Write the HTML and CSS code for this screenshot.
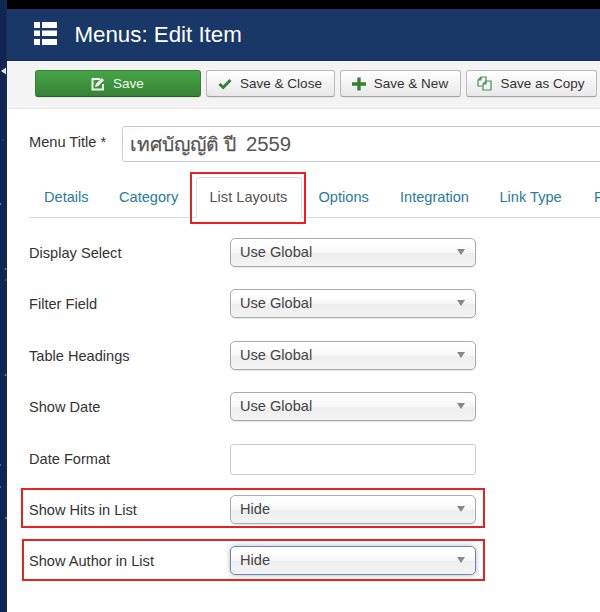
FILE: index.html
```html
<!DOCTYPE html>
<html lang="en">
<head>
<meta charset="utf-8">
<title>Menus: Edit Item</title>
<link rel="stylesheet" href="styles.css">
</head>
<body>
<div class="page">
  <aside class="rail">
    <svg width="7" height="612" viewBox="0 0 7 612"><path d="M1 71 6 67.500V74.500Z" fill="#e2e5ed"/><g fill="#5d7aae"><circle cx="5.500" cy="269" r="1"/><circle cx="5.500" cy="280" r=".8"/><circle cx="5.500" cy="375" r="1"/><circle cx="0" cy="204" r="1.200"/><circle cx="3" cy="140" r=".6"/><circle cx="0" cy="465" r="1"/><circle cx="0" cy="487" r="1"/><circle cx="6" cy="518" r="1"/></g></svg>
  </aside>
  <main class="main">
    <div class="topbar"></div>
    <header class="header">
      <svg class="list-icon" width="23" height="23" viewBox="0 0 23 23" fill="#fff"><path d="M0 0h6v6H0zM8 0h15v6H8zM0 8.500h6v5.500H0zM8 8.500h15v5.500H8zM0 17h6v6H0zM8 17h15v6H8z"/></svg>
      <h1>Menus: Edit Item</h1>
    </header>
    <div class="toolbar">
      <button class="btn save"><svg width="14" height="14" viewBox="0 0 14 14" fill="none" stroke="#edfbed"><path d="M9 2H1.500V12.500H12V7" stroke-width="2"/><path d="M4 10 4.800 7 10.800 1 13 3.200 7 9.200Z" fill="#edfbed" stroke="none"/></svg><span>Save</span></button>
      <button class="btn close"><svg width="14" height="14" viewBox="0 0 14 14"><path d="M1.500 7 5.200 10.500 12.500 3" fill="none" stroke="#378137" stroke-width="3"/></svg><span>Save &amp; Close</span></button>
      <button class="btn new"><svg width="14" height="14" viewBox="0 0 14 14"><path d="M7 .5V13.500M0 7H14" stroke="#378137" stroke-width="3.400"/></svg><span>Save &amp; New</span></button>
      <button class="btn copy"><svg width="15" height="15" viewBox="0 0 15 15" fill="#f3faf3" stroke="#4c8d50" stroke-width="1.200"><path d="M4 1H9V10H1V4ZM4 1V4H1"/><path d="M9 5H14V14H6V8ZM9 5V8H6"/></svg><span>Save as Copy</span></button>
    </div>
    <div class="content">
      <div class="title-row"><label>Menu Title *</label><div class="title-input"><span class="thai">เทศบัญญัติ ปี</span><span>2559</span></div></div>
      <nav class="tabs">
        <a class="details">Details</a><a class="category">Category</a><a class="active">List Layouts<i class="mark tab-mark"></i></a><a class="options">Options</a><a class="integration">Integration</a><a class="link-type">Link Type</a><a>Page Display</a>
      </nav>
      <div class="form">
        <div class="row"><label>Display Select</label><div class="select">Use Global</div></div>
        <div class="row"><label>Filter Field</label><div class="select">Use Global</div></div>
        <div class="row"><label>Table Headings</label><div class="select">Use Global</div></div>
        <div class="row"><label>Show Date</label><div class="select">Use Global</div></div>
        <div class="row"><label>Date Format</label><div class="text-input"></div></div>
        <div class="row"><label>Show Hits in List</label><div class="select">Hide</div><i class="mark hits-mark"></i></div>
        <div class="row"><label>Show Author in List</label><div class="select focus">Hide</div><i class="mark author-mark"></i></div>
      </div>
    </div>
  </main>
</div>
</body>
</html>
```
FILE: styles.css
```css
* { box-sizing: border-box; }
body { margin: 0; background: #fff; color: #333; font: 14.600px "Liberation Sans", Arial, sans-serif; }
.page { display: flex; width: 600px; height: 612px; overflow: hidden; }
.rail { flex: 0 0 7px; background: linear-gradient(90deg, #102552 0 5px, #1b2b50); }
.rail svg { display: block; }
.main { flex: 1; min-width: 0; overflow: hidden; }
.topbar { height: 9px; background: #000; }
.header { height: 52px; padding: 0 27px; display: flex; align-items: center; gap: 17.500px; background: #1a3867; border-bottom: 1px solid #142c54; color: #fff; }
.list-icon { display: block; margin-top: -3px; }
h1 { margin: 0; font-size: 22.300px; font-weight: normal; line-height: 50px; }
.toolbar { height: 48px; padding: 9px 0 0 27.500px; display: flex; gap: 5px; background: #f4f4f4; border-bottom: 1px solid #e5e5e5; }
.btn { flex: none; height: 27px; padding: 0; display: flex; align-items: center; justify-content: center; gap: 8px; border: 1px solid #bbb; border-bottom-color: #a2a2a2; border-radius: 3px; background: linear-gradient(#fff, #e8e8e8); color: #333; font: 13.500px "Liberation Sans", Arial, sans-serif; box-shadow: 0 1px 1px #0001; white-space: nowrap; }
.save { width: 166px; border-color: #388038 #378037 #286028; background: linear-gradient(#46a546, #378137); color: #edfbed; }
.close { width: 129px; }
.new { width: 121px; }
.copy { width: 131px; }
.content { padding: 17px 0 0 22px; }
.title-row { display: flex; height: 36px; }
.title-row label { width: 93px; flex: none; padding-top: 8px; }
.title-input { width: 520px; flex: none; height: 36px; padding-left: 7px; display: flex; gap: 6px; align-items: center; border: 1px solid #ccc; border-radius: 3px; color: #555; font-size: 20.300px; }
.thai { width: 110px; font-size: 19.300px; white-space: nowrap; -webkit-text-stroke: .25px #555; }
.tabs { display: flex; height: 41px; margin-top: 15px; width: 640px; border-bottom: 1px solid #ddd; color: #2a7b9c; }
.tabs a { flex: none; height: 41px; padding-left: 15px; line-height: 41px; white-space: nowrap; }
.tabs .details { width: 75px; }
.tabs .category { width: 92px; }
.tabs .active { position: relative; width: 106px; padding-left: 12.500px; border: 1px solid #ddd; border-bottom: 0; border-radius: 4px 4px 0 0; background: #fff; color: #555; line-height: 39px; }
.tabs .options { width: 82px; padding-left: 16.500px; }
.tabs .integration { width: 100px; padding-left: 16px; }
.tabs .link-type { width: 95px; padding-left: 15.500px; }
.form { padding-top: 20px; }
.row { position: relative; display: flex; height: 51.400px; }
.row label { width: 201px; flex: none; padding-top: 7px; }
.select { position: relative; width: 246px; height: 29px; padding-left: 9px; border: 1px solid #aaa; border-radius: 5px; background: linear-gradient(#fff 20%, #f6f6f6 50%, #eee 52%, #f4f4f4); box-shadow: 0 1px 1px #0000001a; color: #444; line-height: 27px; }
.select::after { content: ""; position: absolute; right: 10px; top: 10px; border: 4px solid transparent; border-top: 6px solid #888; border-bottom: 0; }
.focus { border-color: #6689b8; box-shadow: 0 0 5px #0000004d; }
.text-input { width: 246px; height: 31px; border: 1px solid #ccc; border-radius: 3px; }
.mark { position: absolute; z-index: 1; border: 2px solid #e32222; pointer-events: none; }
.tab-mark { left: -7px; top: -6px; width: 116px; height: 52px; }
.hits-mark { left: -8px; top: -7px; width: 464px; height: 40px; }
.author-mark { left: -7px; top: -7px; width: 463px; height: 42px; }
```
